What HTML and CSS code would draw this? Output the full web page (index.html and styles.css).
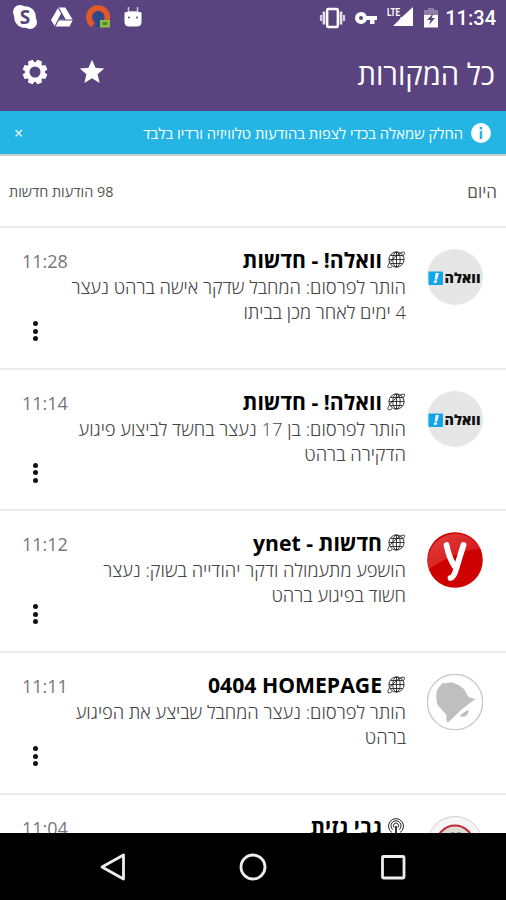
FILE: index.html
```html
<!DOCTYPE html>
<html lang="he" dir="rtl">
<head>
  <meta charset="UTF-8">
  <meta name="viewport" content="width=device-width, initial-scale=1.0">
  <title>כל המקורות</title>
  <link rel="stylesheet" href="styles.css">
</head>
<body>

<svg class="sprite" width="0" height="0">
  <symbol id="globe" viewBox="0 0 20 20">
    <g fill="none" stroke="#222" stroke-width=".9">
      <circle cx="10.500" cy="9.500" r="7.600"/>
      <ellipse cx="10.500" cy="9.500" rx="3.700" ry="7.600"/>
      <path d="M10.500 2v15M3 9.500h15M4.500 5.500h12M4.500 13.500h12"/>
      <path d="M2 17.500c-1.200-2 3-7 7-10.500s8.500-6 9.500-4.500c.5 1-.6 2.500-1.800 4M2 17.500c.8.6 2.200.2 4-.8"/>
    </g>
  </symbol>
</svg>

<div class="app">
  <header class="main-header">
    <div class="status-bar">
      <div class="status-group">
        <span class="clock">11:34</span>
        <svg class="battery" width="16" height="22" viewBox="0 0 16 22">
          <path d="M5 1h6v2h4v7H1V3h4z" fill="#8f80aa"/>
          <path d="M1 8h14v12.500H1z" fill="#fff"/>
          <path d="M10.500 6L4 13h3.500l-1.500 5 6-7H8.700z" fill="#5a4480"/>
        </svg>
        <svg class="signal" width="27" height="22" viewBox="0 0 27 22">
          <text x="0" y="11" font-size="11.500" font-weight="700" textLength="13" lengthAdjust="spacingAndGlyphs" fill="#fff">LTE</text>
          <path d="M26 2v19H6l7.500-7.500V12h1.500z" fill="#fff"/>
        </svg>
        <svg class="key" width="24" height="14" viewBox="0 0 24 14">
          <path d="M7 1a6 6 0 1 0 5.700 8H16v4h4.500V9H23V5H12.700A6 6 0 0 0 7 1zm0 4a2 2 0 1 1 0 4 2 2 0 0 1 0-4z" fill="#fff" fill-rule="evenodd"/>
        </svg>
        <svg class="vibrate" width="27" height="22" viewBox="0 0 27 22">
          <rect x="8.200" y="2" width="10.600" height="18" rx="1" fill="none" stroke="#fff" stroke-width="2.400"/>
          <path d="M5 4.500v13M22 4.500v13" stroke="#e5e0ec" stroke-width="2.800"/>
          <path d="M2 8v6M25 8v6" stroke="#d4cce0" stroke-width="2.200"/>
        </svg>
      </div>
      <div class="status-group apps">
        <svg width="20" height="22" viewBox="0 0 20 22">
          <path d="M5.500 1v6M14.500 1v6" stroke="#cfc6dc" stroke-width="1.500"/>
          <path d="M1.500 6.500q8.500-2.600 17 0V16q0 4.500-5 4.500h-7q-5 0-5-4.500z" fill="#fff"/>
          <circle cx="6" cy="11.500" r="1" fill="#5a4480"/>
          <circle cx="14" cy="11.500" r="1" fill="#5a4480"/>
        </svg>
        <svg width="25" height="24" viewBox="0 0 25 24">
          <path d="M7 20A9.300 9.300 0 1 1 19.500 18" fill="none" stroke="#e2592a" stroke-width="5.500"/>
          <circle cx="12.500" cy="12" r="5" fill="#2a4a86"/>
          <path d="M10 15h5v7h-5z" fill="#2a4a86"/>
          <path d="M14 15h10v7.500H14z" fill="#8bbf45"/>
          <path d="M16.500 17h5v3h-5z" fill="#55852c"/>
        </svg>
        <svg width="24" height="22" viewBox="0 0 24 22">
          <path d="M8.300 1.500h7L22.800 14l-3.200 6.500H5L1 14z" fill="#fff"/>
          <path d="M11.700 7.500l3.200 6H8.500z" fill="#5a4480"/>
          <path d="M8.300 1.500L15.300 14H23M11.700 7.500L5 20.500M8.500 14h7" fill="none" stroke="#5a4480" stroke-width="1.200"/>
        </svg>
        <svg width="26" height="26" viewBox="0 0 26 26">
          <circle cx="8" cy="8" r="7" fill="#fff"/>
          <circle cx="18" cy="18" r="7" fill="#fff"/>
          <circle cx="13" cy="13" r="10.800" fill="#fff"/>
          <text x="13" y="19.800" text-anchor="middle" font-size="19" font-weight="700" fill="#5a4480">S</text>
        </svg>
      </div>
    </div>
    <div class="toolbar">
      <h1>כל המקורות</h1>
      <div class="actions">
        <svg width="26" height="26" viewBox="0 0 26 26">
          <path d="M13 .8l3.500 8 8.700.8-6.600 5.700 2 8.600L13 19.300l-7.600 4.600 2-8.600L.8 9.600l8.700-.8z" fill="#fff"/>
        </svg>
        <svg width="26" height="26" viewBox="0 0 26 26">
          <circle cx="13" cy="13" r="7.600" fill="none" stroke="#fff" stroke-width="4.200"/>
          <g fill="#fff" transform="rotate(22.500 13 13)">
            <path id="tooth" d="M9.500 5l1-4.300h5l1 4.300z"/>
            <use href="#tooth" transform="rotate(45 13 13)"/>
            <use href="#tooth" transform="rotate(90 13 13)"/>
            <use href="#tooth" transform="rotate(135 13 13)"/>
            <use href="#tooth" transform="rotate(180 13 13)"/>
            <use href="#tooth" transform="rotate(225 13 13)"/>
            <use href="#tooth" transform="rotate(270 13 13)"/>
            <use href="#tooth" transform="rotate(315 13 13)"/>
          </g>
        </svg>
      </div>
    </div>
  </header>

  <div class="banner">
    <svg width="20" height="20" viewBox="0 0 20 20">
      <circle cx="10" cy="10" r="10" fill="#fff"/>
      <path d="M10 4v2.500M10 8v8" stroke="#25b5e5" stroke-width="2.500"/>
    </svg>
    <span class="banner-text">החלק שמאלה בכדי לצפות בהודעות טלוויזיה ורדיו בלבד</span>
    <span class="close">×</span>
  </div>

  <div class="section-head">
    <span class="day">היום</span>
    <span class="count">98 הודעות חדשות</span>
  </div>

  <main class="feed">
    <article class="item">
      <svg class="avatar" viewBox="0 0 56 56">
        <circle cx="28" cy="28" r="28" fill="#e6e6e6"/>
        <rect x="1.500" y="22.500" width="14.500" height="13.500" rx="1" fill="#12a5e8"/>
        <text x="9" y="34" text-anchor="middle" font-size="14" font-weight="800" font-style="italic" fill="#fff">!</text>
        <text x="35.500" y="34" text-anchor="middle" font-size="14" font-weight="800" textLength="36" lengthAdjust="spacingAndGlyphs" fill="#111">וואלה</text>
      </svg>
      <div class="content">
        <h2><svg class="kind"><use href="#globe"/></svg><span>וואלה! - חדשות</span></h2>
        <p>הותר לפרסום: המחבל שדקר אישה ברהט נעצר<br>4 ימים לאחר מכן בביתו</p>
      </div>
      <div class="side">
        <time>11:28</time>
        <span class="dots"><i></i><i></i><i></i></span>
      </div>
    </article>

    <article class="item">
      <svg class="avatar" viewBox="0 0 56 56">
        <circle cx="28" cy="28" r="28" fill="#e6e6e6"/>
        <rect x="1.500" y="22.500" width="14.500" height="13.500" rx="1" fill="#12a5e8"/>
        <text x="9" y="34" text-anchor="middle" font-size="14" font-weight="800" font-style="italic" fill="#fff">!</text>
        <text x="35.500" y="34" text-anchor="middle" font-size="14" font-weight="800" textLength="36" lengthAdjust="spacingAndGlyphs" fill="#111">וואלה</text>
      </svg>
      <div class="content">
        <h2><svg class="kind"><use href="#globe"/></svg><span>וואלה! - חדשות</span></h2>
        <p>הותר לפרסום: בן 17 נעצר בחשד לביצוע פיגוע<br>הדקירה ברהט</p>
      </div>
      <div class="side">
        <time>11:14</time>
        <span class="dots"><i></i><i></i><i></i></span>
      </div>
    </article>

    <article class="item">
      <svg class="avatar" viewBox="0 0 56 56">
        <defs>
          <linearGradient id="gloss" x1="0" y1="0" x2="1" y2="1">
            <stop offset="0" stop-color="#e04040"/>
            <stop offset="1" stop-color="#d40c0c"/>
          </linearGradient>
        </defs>
        <circle cx="28" cy="28" r="27.800" fill="#cf0000"/>
        <path d="M2 37A27.500 27.500 0 0 1 53 17Q33 17 2 37z" fill="url(#gloss)"/>
        <path d="M19.500 13Q22 26 27.500 34M36.500 13Q33 24 29.500 36 27 45.500 23.500 46" fill="none" stroke="#fff" stroke-width="5.800" stroke-linecap="round"/>
      </svg>
      <div class="content">
        <h2><svg class="kind"><use href="#globe"/></svg><span>חדשות - ynet</span></h2>
        <p>הושפע מתעמולה ודקר יהודייה בשוק: נעצר<br>חשוד בפיגוע ברהט</p>
      </div>
      <div class="side">
        <time>11:12</time>
        <span class="dots"><i></i><i></i><i></i></span>
      </div>
    </article>

    <article class="item">
      <svg class="avatar" viewBox="0 0 56 56">
        <circle cx="28" cy="28" r="27.700" fill="#fff" stroke="#c8c8c8" stroke-width="1.300"/>
        <path d="M10 16.500Q12 12 14 11q1-3 4-1.500 7-2 11 .5 6 2.500 8.500 6Q40 20 41 22.500q4 2 7.700 2.500Q41 30 34 36q-7 7-13 12.500-2.500-1-1.500-7.500L10.500 31Q8.500 23 10 16.500z" fill="#bfbfbf"/>
        <path d="M32.500 42q4-4 9-6.500 0 4-1.500 5.500-3 3-7.500 1z" fill="#bfbfbf"/>
      </svg>
      <div class="content">
        <h2><svg class="kind"><use href="#globe"/></svg><span class="latin">0404 HOMEPAGE</span></h2>
        <p>הותר לפרסום: נעצר המחבל שביצע את הפיגוע<br>ברהט</p>
      </div>
      <div class="side">
        <time>11:11</time>
        <span class="dots"><i></i><i></i><i></i></span>
      </div>
    </article>

    <article class="item">
      <svg class="avatar" viewBox="0 0 56 56">
        <circle cx="28" cy="28" r="27.500" fill="#f6f6f6" stroke="#cfcfcf"/>
        <circle cx="28" cy="28" r="18.500" fill="#dcdcd4" stroke="#bb2c30" stroke-width="2"/>
        <path d="M24 17h3M30 17h4" stroke="#999" stroke-width="2"/>
      </svg>
      <div class="content">
        <h2>
          <svg class="kind" viewBox="0 0 20 20">
            <g fill="none" stroke="#222" stroke-width="1">
              <path d="M6 15.500A7.500 7.500 0 1 1 14 15.500"/>
              <path d="M7 12.800A5 5 0 1 1 13 12.800"/>
              <path d="M8.200 10.600A2.600 2.600 0 1 1 11.800 10.600"/>
              <path d="M10 9v10" stroke-width="1.800"/>
            </g>
          </svg><span>גבי גזית</span>
        </h2>
      </div>
      <div class="side">
        <time>11:04</time>
      </div>
    </article>
  </main>

  <nav class="nav-bar">
    <svg width="28" height="28" viewBox="0 0 28 28"><path d="M24.500 2v24L3 14z"/></svg>
    <svg width="28" height="28" viewBox="0 0 28 28"><circle cx="14" cy="14" r="12"/></svg>
    <svg width="28" height="28" viewBox="0 0 28 28"><rect x="3.500" y="3.500" width="21.500" height="21.500" rx="1"/></svg>
  </nav>
</div>

</body>
</html>
```
FILE: styles.css
```css
html, body {
  margin: 0;
  background: #fff;
  font-family: 'Open Sans', 'Noto Sans', sans-serif;
}

svg {
  direction: ltr;
  flex: none;
  display: block;
}

.sprite {
  position: absolute;
}

.app {
  height: 900px;
  display: flex;
  flex-direction: column;
  overflow: hidden;
}

.main-header {
  height: 111px;
  flex: none;
  background: #5a4480;
  color: #fff;
}

.status-bar {
  height: 36px;
  display: flex;
  justify-content: space-between;
  padding: 0 10px 0 12px;
}

.status-group {
  display: flex;
  align-items: center;
}

.status-group.apps {
  gap: 12px;
  padding-bottom: 2px;
}

.clock {
  font-family: Roboto, sans-serif;
  font-size: 20px;
  font-weight: 500;
  width: 50px;
}

.battery {
  margin-right: 7px;
}

.signal {
  margin-right: 9px;
  margin-bottom: 4px;
  font-family: Roboto, sans-serif;
}

.key {
  margin-right: 9px;
}

.vibrate {
  margin-right: 8px;
}

.toolbar {
  height: 75px;
  display: flex;
  align-items: center;
  justify-content: space-between;
  padding: 0 11px 0 22px;
}

.toolbar h1 {
  margin: 0;
  font-size: 29.2px;
  font-weight: 400;
  line-height: 40px;
}

.actions {
  display: flex;
  gap: 31px;
  padding-bottom: 4px;
}

.banner {
  height: 43px;
  flex: none;
  display: flex;
  align-items: center;
  padding: 0 15px 0 14px;
  background: #25b5e5;
  border-bottom: 2px solid #ccc;
  color: #fff;
  font-size: 14.8px;
}

.banner-text {
  margin-right: 8px;
  white-space: nowrap;
}

.close {
  margin-right: auto;
  font-size: 16px;
}

.section-head {
  height: 70px;
  flex: none;
  display: flex;
  align-items: center;
  justify-content: space-between;
  padding: 0 9px;
  color: #555;
}

.day {
  font-size: 17px;
}

.count {
  font-size: 14.4px;
}

.feed {
  flex: 1;
  min-height: 0;
  overflow: hidden;
}

.item {
  height: 141.7px;
  box-sizing: border-box;
  border-top: 2px solid #ebebeb;
  display: flex;
  padding: 20px 23px 0 22px;
}

.avatar {
  width: 56px;
  height: 56px;
  margin-top: 1px;
}

.content {
  margin-right: 21px;
  white-space: nowrap;
}

.content h2 {
  display: flex;
  align-items: center;
  margin: 0;
  height: 24px;
  font-size: 21.2px;
  font-weight: 700;
  line-height: 24px;
  color: #000;
}

.latin {
  direction: ltr;
}

.kind {
  width: 20px;
  height: 20px;
  margin-left: 4px;
}

.content p {
  margin: 2px 0 0;
  font-size: 18.4px;
  font-weight: 300;
  line-height: 25px;
  color: #444;
}

.side {
  margin-right: auto;
  display: flex;
  flex-direction: column;
  align-items: flex-end;
}

.side time {
  font-size: 18px;
  line-height: 26px;
  color: #777;
}

.dots {
  display: flex;
  flex-direction: column;
  gap: 2.5px;
  margin: 47px 0 0 11px;
}

.dots i {
  width: 5px;
  height: 5px;
  border-radius: 50%;
  background: #111;
}

.nav-bar {
  height: 67px;
  flex: none;
  display: flex;
  direction: ltr;
  justify-content: center;
  align-items: center;
  gap: 112px;
  background: #000;
}

.nav-bar svg {
  fill: none;
  stroke: #eee;
  stroke-width: 2.8;
  stroke-linejoin: round;
}
```
